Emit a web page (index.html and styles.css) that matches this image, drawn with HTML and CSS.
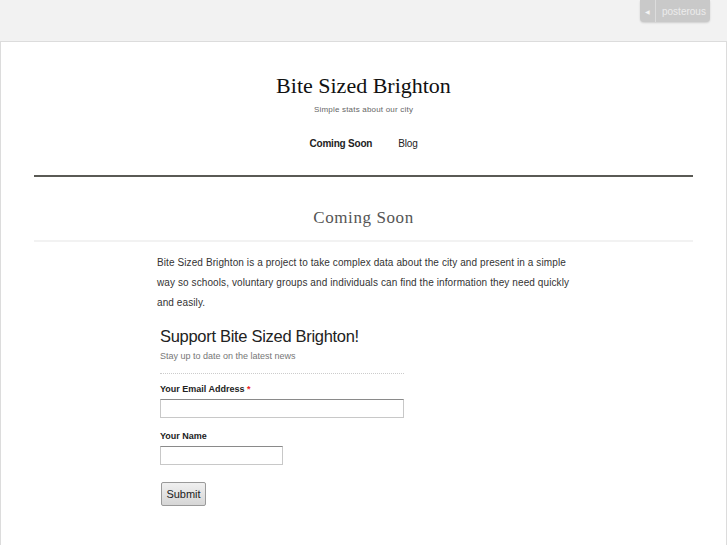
FILE: index.html
```html
<!DOCTYPE html>
<html>
<head>
<meta charset="utf-8">
<link rel="stylesheet" href="styles.css">
</head>
<body>
<a class="badge" href="#"><span class="badge-icon">&#9664;</span><span class="badge-text">posterous</span></a>
<div class="page">
  <header class="header">
    <h1 class="title">Bite Sized Brighton</h1>
    <p class="tagline">Simple stats about our city</p>
    <nav class="nav">
      <a class="nav-item active" href="#">Coming Soon</a>
      <a class="nav-item" href="#">Blog</a>
    </nav>
  </header>
  <h2 class="page-title">Coming Soon</h2>
  <div class="content">
    <p class="intro">Bite Sized Brighton is a project to take complex data about the city and present in a simple way so schools, voluntary groups and individuals can find the information they need quickly and easily.</p>
    <form class="form">
      <h3 class="form-title">Support Bite Sized Brighton!</h3>
      <p class="form-sub">Stay up to date on the latest news</p>
      <div class="field">
        <label class="label">Your Email Address <span class="req">*</span></label>
        <input class="input wide" type="text">
      </div>
      <div class="field">
        <label class="label">Your Name</label>
        <input class="input narrow" type="text">
      </div>
      <button class="submit" type="button">Submit</button>
    </form>
  </div>
</div>
</body>
</html>
```
FILE: styles.css
```css
html, body {
  margin: 0;
  padding: 0;
  background: #f2f2f2;
  height: 100%;
}
body {
  font-family: "Liberation Sans", Arial, sans-serif;
  color: #333;
  overflow: hidden;
}
.badge {
  position: absolute;
  top: 0;
  left: 640px;
  width: 70px;
  height: 22px;
  background: #c9c9c9;
  border-radius: 0 0 4px 4px;
  box-shadow: 0 1px 2px rgba(0,0,0,0.15);
  display: flex;
  align-items: center;
  text-decoration: none;
  font-size: 10px;
  color: #eee;
}
.badge-icon {
  width: 15px;
  height: 22px;
  border-right: 1px solid #dcdcdc;
  display: flex;
  align-items: center;
  justify-content: center;
  font-size: 6px;
  color: #f4f4f4;
}
.badge-text {
  padding-left: 6px;
  letter-spacing: 0;
  color: #ececec;
}
.page {
  margin-top: 41px;
  background: #fff;
  border: 1px solid #dcdcdc;
  border-bottom: none;
  min-height: 520px;
  padding: 0 33px;
}
.header {
  text-align: center;
  border-bottom: 2px solid #5a5a55;
  padding-top: 30px;
  height: 103px;
}
.title {
  margin: 0;
  font-family: "Liberation Serif", "Times New Roman", serif;
  font-weight: normal;
  font-size: 22px;
  line-height: 28px;
  color: #111;
}
.tagline {
  margin: 5px 0 0;
  font-size: 8px;
  line-height: 10px;
  color: #666;
  letter-spacing: 0.2px;
}
.nav {
  margin-top: 23px;
  display: flex;
  justify-content: center;
  gap: 26px;
  padding-left: 0;
}
.nav-item {
  font-size: 10px;
  line-height: 12px;
  color: #222;
  text-decoration: none;
  letter-spacing: -0.2px;
}
.nav-item.active {
  font-weight: bold;
}
.page-title {
  margin: 0;
  text-align: center;
  font-family: "Liberation Serif", "Times New Roman", serif;
  font-weight: normal;
  font-size: 17px;
  letter-spacing: 0.6px;
  color: #555;
  padding-top: 31px;
  height: 32px;
  line-height: 20px;
  border-bottom: 2px solid #f2f2f2;
}
.content {
  width: 422px;
  margin: 0 0 0 123px;
  padding-top: 11px;
}
.intro {
  margin: 0;
  font-size: 10px;
  line-height: 20px;
  color: #333;
  letter-spacing: 0.1px;
}
.form {
  margin: 11px 0 0 3px;
  width: 244px;
}
.form-title {
  margin: 0;
  font-size: 16.5px;
  font-weight: normal;
  line-height: 22px;
  padding-top: 1px;
  color: #222;
  letter-spacing: -0.3px;
}
.form-sub {
  margin: 3px 0 0;
  font-size: 9px;
  line-height: 12px;
  color: #777;
  letter-spacing: 0;
  padding-bottom: 11px;
  border-bottom: 1px dotted #ccc;
}
.field {
  margin-top: 10px;
}
.field + .field {
  margin-top: 13px;
}
.label {
  display: block;
  font-size: 9px;
  line-height: 11px;
  font-weight: bold;
  color: #222;
  margin-bottom: 4px;
}
.req {
  color: #e22;
}
.input {
  display: block;
  box-sizing: border-box;
  height: 19px;
  margin: 0;
  border: 1px solid #c8c8c8;
  border-top-color: #8a8a8a;
  background: #fff;
}
.input.wide {
  width: 244px;
}
.input.narrow {
  width: 123px;
}
.submit {
  display: block;
  margin: 17px 0 0 1px;
  height: 24px;
  width: 45px;
  padding: 0;
  font-family: "Liberation Sans", Arial, sans-serif;
  font-size: 11px;
  color: #222;
  background: linear-gradient(#f0f0f0, #d6d6d6);
  border: 1px solid #9a9a9a;
  border-radius: 2px;
}
```
